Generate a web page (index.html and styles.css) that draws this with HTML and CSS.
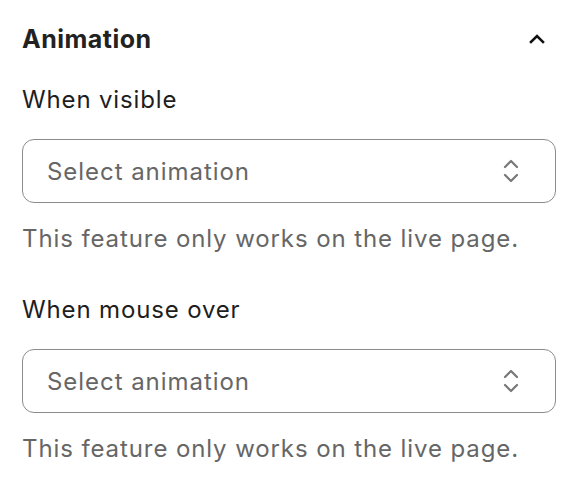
FILE: index.html
```html
<!DOCTYPE html>
<html>
<head>
<meta charset="utf-8">
<link rel="stylesheet" href="styles.css">
</head>
<body>
<div class="panel">
  <div class="header">
    <h2 class="title">Animation</h2>
    <svg class="collapse" width="18" height="12" viewBox="0 0 18 12"><path d="M3 9 L9 3 L15 9" fill="none" stroke="#111" stroke-width="2.6" stroke-linecap="square"/></svg>
  </div>
  <div class="field">
    <div class="label">When visible</div>
    <div class="select">
      <span class="placeholder">Select animation</span>
      <svg class="updown" width="20" height="30" viewBox="0 0 20 30"><path d="M4 11 L10 5 L16 11 M4 19 L10 25 L16 19" fill="none" stroke="#777" stroke-width="2.2" stroke-linecap="round" stroke-linejoin="round"/></svg>
    </div>
    <div class="help">This feature only works on the live page.</div>
  </div>
  <div class="field">
    <div class="label">When mouse over</div>
    <div class="select">
      <span class="placeholder">Select animation</span>
      <svg class="updown" width="20" height="30" viewBox="0 0 20 30"><path d="M4 11 L10 5 L16 11 M4 19 L10 25 L16 19" fill="none" stroke="#777" stroke-width="2.2" stroke-linecap="round" stroke-linejoin="round"/></svg>
    </div>
    <div class="help">This feature only works on the live page.</div>
  </div>
</div>
</body>
</html>
```
FILE: styles.css
```css
html, body { margin: 0; padding: 0; background: #fff; }
body { font-family: Inter, "Noto Sans", sans-serif; color: #1e1e1e; }
.panel { padding: 19px 18px 0 22px; }
.header { display: flex; align-items: center; justify-content: space-between; height: 40px; padding-right: 10px; }
.title { margin: 0; font-size: 25px; font-weight: 700; color: #222; letter-spacing: 0.5px; }
.field { display: flex; flex-direction: column; }
.header + .field { margin-top: 26px; }
.field + .field { margin-top: 42px; }
.label { font-size: 24px; line-height: 30px; color: #1e1e1e; letter-spacing: 0.85px; }
.select { margin-top: 24px; height: 62px; border: 1px solid #8c8c8c; border-radius: 12px; display: flex; align-items: center; justify-content: space-between; padding: 0 34px 0 24px; }
.placeholder { font-size: 24px; color: #666; letter-spacing: 0.95px; }
.help { margin-top: 22px; font-size: 24px; line-height: 28px; color: #666; letter-spacing: 0.9px; }
```
